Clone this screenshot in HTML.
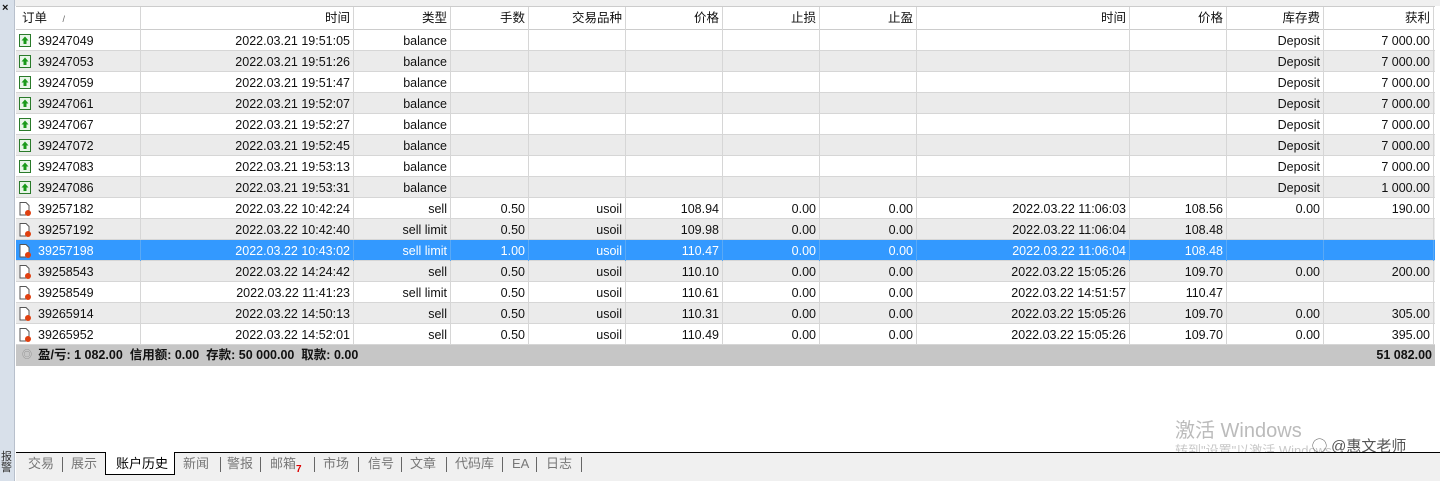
<!DOCTYPE html>
<html><head><meta charset="utf-8"><style>
*{margin:0;padding:0;box-sizing:border-box}
body{width:1440px;height:481px;overflow:hidden;background:#fff;font-family:"Liberation Sans","Noto Sans CJK SC",sans-serif;font-size:12.5px;color:#111;position:relative}
.side{position:absolute;left:0;top:0;width:15px;height:481px;background:#d8e0ea;border-right:1px solid #b8c0cc}
.top{position:absolute;left:15px;top:0;width:1425px;height:6px;background:#f0f0f0}
.grid{position:absolute;left:16px;top:6px;width:1419px}
.r{position:absolute;left:0;width:1419px;height:21px;border-bottom:1px solid #d6d6d6}
.c{position:absolute;top:0;height:21px;line-height:23px;padding:0 3px;text-align:right;white-space:nowrap;border-right:1px solid #d6d6d6}
.alt{background:#ebebeb}
.sel{background:#3399ff;color:#fff}
.sel .c{border-right-color:#5aa9f5}
.hd{background:#fff;height:24px;border-top:1px solid #ccc;border-bottom:1px solid #ccc}
.hd .c{height:23px;line-height:23px}
.ic{position:absolute;left:3px;top:4px;width:12px;height:13px}
.sum{position:absolute;left:16px;top:345px;width:1419px;height:21px;background:#c6c6c6;font-weight:bold;line-height:21px}
.tabs{position:absolute;left:16px;top:452px;width:1424px;height:29px;background:#f0f0f0;border-top:1px solid #000}
.tab{position:absolute;top:0;height:22px;line-height:22px;color:#777;font-size:13px}
.sepv{position:absolute;top:4px;width:1px;height:15px;background:#666}
</style></head><body>
<div class="side"><div style="position:absolute;left:2px;top:2px;font-size:11px;font-weight:bold">×</div>
<div style="position:absolute;left:1px;top:452px;font-size:11px;line-height:11px;color:#333;width:13px">报<br>警</div></div>
<div class="top"></div>
<div class="grid" id="g"></div>
<div class="sum"><span style="position:absolute;left:6px;color:#888;font-weight:normal;font-size:10px">◎</span><span style="position:absolute;left:22px">盈/亏: 1 082.00&nbsp; 信用额: 0.00&nbsp; 存款: 50 000.00&nbsp; 取款: 0.00</span><span style="position:absolute;right:3px">51 082.00</span></div>
<div style="position:absolute;left:1175px;top:414px;font-size:20px;color:#bbb">激活 Windows</div>
<div style="position:absolute;left:1175px;top:440px;font-size:13px;color:#c8c8c8">转到"设置"以激活 Windows。</div>
<div style="position:absolute;left:1312px;top:435px;font-size:15px;color:#555">◯ @惠文老师</div>
<div class="tabs">
<div style="position:absolute;left:89px;top:-1px;width:70px;height:23px;background:#fff;border:1px solid #000;border-top:none"></div>
<div class="tab" style="left:12px">交易</div><div class="sepv" style="left:46px"></div>
<div class="tab" style="left:55px">展示</div>
<div class="tab" style="left:100px;color:#000">账户历史</div>
<div class="tab" style="left:167px">新闻</div><div class="sepv" style="left:204px"></div>
<div class="tab" style="left:211px">警报</div><div class="sepv" style="left:244px"></div>
<div class="tab" style="left:254px">邮箱<span style="color:#d00;font-size:10px;font-weight:bold;position:relative;top:4px">7</span></div><div class="sepv" style="left:298px"></div>
<div class="tab" style="left:307px">市场</div><div class="sepv" style="left:342px"></div>
<div class="tab" style="left:352px">信号</div><div class="sepv" style="left:385px"></div>
<div class="tab" style="left:394px">文章</div><div class="sepv" style="left:430px"></div>
<div class="tab" style="left:439px">代码库</div><div class="sepv" style="left:486px"></div>
<div class="tab" style="left:496px">EA</div><div class="sepv" style="left:520px"></div>
<div class="tab" style="left:530px">日志</div><div class="sepv" style="left:565px"></div>
</div>
<script>
var xs=[0,125,338,435,513,610,707,804,901,1114,1211,1308,1418];
var hd=["订单","时间","类型","手数","交易品种","价格","止损","止盈","时间","价格","库存费","获利"];
var rows=[
["39247049","2022.03.21 19:51:05","balance","","","","","","","","Deposit","7 000.00"],
["39247053","2022.03.21 19:51:26","balance","","","","","","","","Deposit","7 000.00"],
["39247059","2022.03.21 19:51:47","balance","","","","","","","","Deposit","7 000.00"],
["39247061","2022.03.21 19:52:07","balance","","","","","","","","Deposit","7 000.00"],
["39247067","2022.03.21 19:52:27","balance","","","","","","","","Deposit","7 000.00"],
["39247072","2022.03.21 19:52:45","balance","","","","","","","","Deposit","7 000.00"],
["39247083","2022.03.21 19:53:13","balance","","","","","","","","Deposit","7 000.00"],
["39247086","2022.03.21 19:53:31","balance","","","","","","","","Deposit","1 000.00"],
["39257182","2022.03.22 10:42:24","sell","0.50","usoil","108.94","0.00","0.00","2022.03.22 11:06:03","108.56","0.00","190.00"],
["39257192","2022.03.22 10:42:40","sell limit","0.50","usoil","109.98","0.00","0.00","2022.03.22 11:06:04","108.48","",""],
["39257198","2022.03.22 10:43:02","sell limit","1.00","usoil","110.47","0.00","0.00","2022.03.22 11:06:04","108.48","",""],
["39258543","2022.03.22 14:24:42","sell","0.50","usoil","110.10","0.00","0.00","2022.03.22 15:05:26","109.70","0.00","200.00"],
["39258549","2022.03.22 11:41:23","sell limit","0.50","usoil","110.61","0.00","0.00","2022.03.22 14:51:57","110.47","",""],
["39265914","2022.03.22 14:50:13","sell","0.50","usoil","110.31","0.00","0.00","2022.03.22 15:05:26","109.70","0.00","305.00"],
["39265952","2022.03.22 14:52:01","sell","0.50","usoil","110.49","0.00","0.00","2022.03.22 15:05:26","109.70","0.00","395.00"]];
var up='<svg class="ic" viewBox="0 0 12 13"><rect x="0.5" y="0.5" width="11" height="12" fill="#e8f5e8" stroke="#2a7a2a"/><path d="M6 2.5L9.5 6.5H7.5V10H4.5V6.5H2.5Z" fill="#1a9a1a"/></svg>';
var dn='<svg class="ic" viewBox="0 0 12 14" style="height:14px;top:4px"><path d="M1 .5H7L10 3.5V13H1Z" fill="#fff" stroke="#555"/><circle cx="9" cy="11" r="3" fill="#e04010"/></svg>';
var h='';
h+='<div class="r hd" style="top:0">';
for(var i=0;i<12;i++){h+='<div class="c" style="left:'+xs[i]+'px;width:'+(xs[i+1]-xs[i])+'px;'+(i==0?'text-align:left;padding-left:6px':'')+'">'+hd[i]+(i==0?' <span style="font-size:9px;color:#666;margin-left:12px">/</span>':'')+'</div>';}
h+='</div>';
for(var j=0;j<rows.length;j++){var cls=j==10?'sel':(j%2?'alt':'');
h+='<div class="r '+cls+'" style="top:'+(24+j*21)+'px">';
for(var i=0;i<12;i++){var t=rows[j][i];
h+='<div class="c" style="left:'+xs[i]+'px;width:'+(xs[i+1]-xs[i])+'px;'+(i==0?'text-align:left;padding-left:22px':'')+'">'+(i==0?(j<8?up:dn):'')+t+'</div>';}
h+='</div>';}
document.getElementById('g').innerHTML=h;
</script>
</body></html>
